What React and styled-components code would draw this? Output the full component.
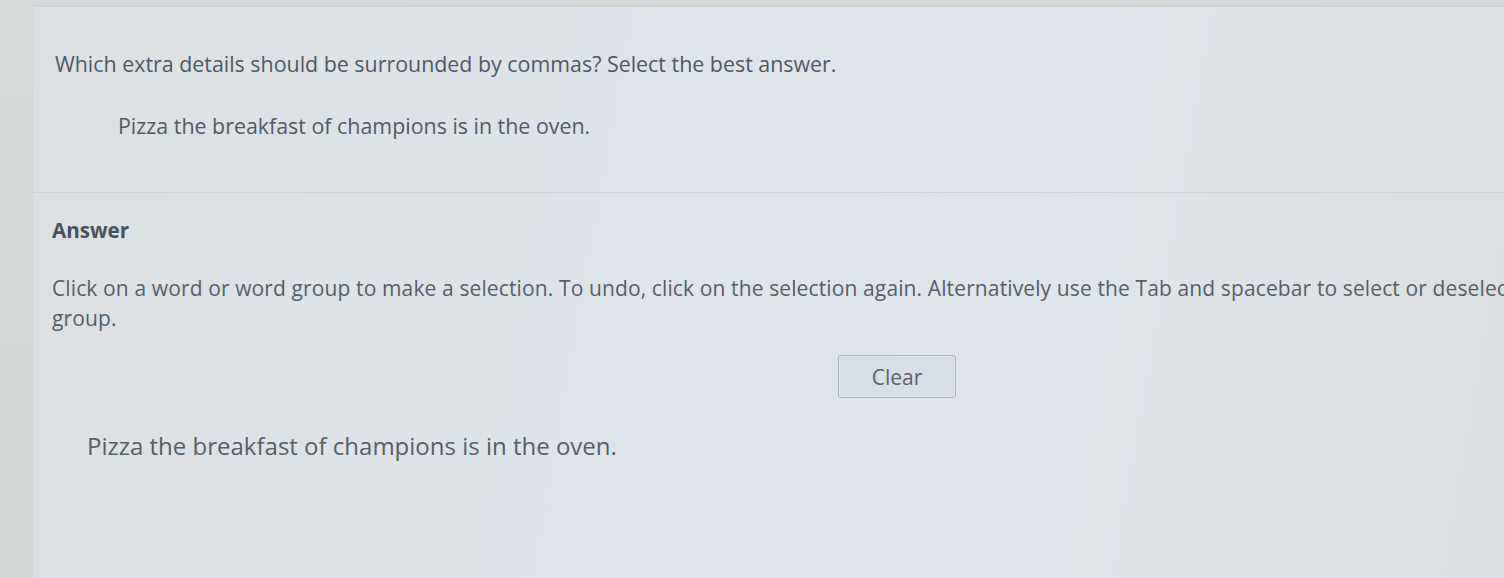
import React from 'react';
import styled, { createGlobalStyle } from 'styled-components';

const GlobalStyle = createGlobalStyle`
  html, body {
    margin: 0;
    padding: 0;
    overflow: hidden;
    background: #d4d9d9;
  }
  body {
    font-family: "Open Sans", "Liberation Sans", sans-serif;
    -webkit-font-smoothing: antialiased;
  }
`;

const Page = styled.div`
  display: flex;
  width: 1504px;
  height: 578px;
  overflow: hidden;
`;

const Gutter = styled.div`
  flex: 0 0 33px;
  background: linear-gradient(180deg, #d6dada 0%, #d3d8d7 60%, #d2d6d5 100%);
`;

const Panel = styled.div`
  flex: 0 0 1700px;
  margin-top: 5px;
  border-top: 2px solid #cdd2d6;
  background: linear-gradient(100deg, #dce0e2 0%, #dfe4ea 35%, #e0e5eb 60%, #dadedf 90%);
`;

const Question = styled.section`
  padding: 43px 0 52px 22px;
  border-bottom: 1px solid #d0d5da;
`;

const Prompt = styled.p`
  margin: 0;
  font-size: 21.4px;
  line-height: 28px;
  color: #505866;
`;

const Sentence = styled.p`
  margin: 34px 0 0 63px;
  font-size: 21.4px;
  line-height: 28px;
  color: #535a66;
`;

const AnswerSection = styled.section`
  padding: 23px 0 0 19px;
`;

const Heading = styled.h2`
  margin: 0;
  font-size: 20.6px;
  font-weight: 700;
  line-height: 28px;
  color: #4a5058;
`;

const Instructions = styled.p`
  margin: 29px 0 0;
  white-space: nowrap;
  font-size: 21px;
  letter-spacing: 0.12px;
  line-height: 30px;
  color: #575e68;
`;

const ButtonRow = styled.div`
  width: 1690px;
  display: flex;
  justify-content: center;
  margin-top: 22px;
`;

const ClearButton = styled.button`
  width: 118px;
  height: 43px;
  border: 1.5px solid #aab4c2;
  border-radius: 3px;
  background: #d8dee6;
  font-family: inherit;
  font-size: 21px;
  color: #5a616c;
  box-shadow: inset 0 0 0 1px #e3e7ed;
`;

const Selectable = styled.p`
  margin: 32px 0 0 35px;
  font-size: 24px;
  line-height: 32px;
  color: #575e68;
`;

export default function App() {
  return (
    <>
      <GlobalStyle />
      <Page>
        <Gutter />
        <Panel>
          <Question>
            <Prompt>Which extra details should be surrounded by commas? Select the best answer.</Prompt>
            <Sentence>Pizza the breakfast of champions is in the oven.</Sentence>
          </Question>
          <AnswerSection>
            <Heading>Answer</Heading>
            <Instructions>
              Click on a word or word group to make a selection. To undo, click on the selection again. Alternatively use the Tab and spacebar to select or deselect a word or word
              <br />
              group.
            </Instructions>
            <ButtonRow>
              <ClearButton>Clear</ClearButton>
            </ButtonRow>
            <Selectable>Pizza the breakfast of champions is in the oven.</Selectable>
          </AnswerSection>
        </Panel>
      </Page>
    </>
  );
}
